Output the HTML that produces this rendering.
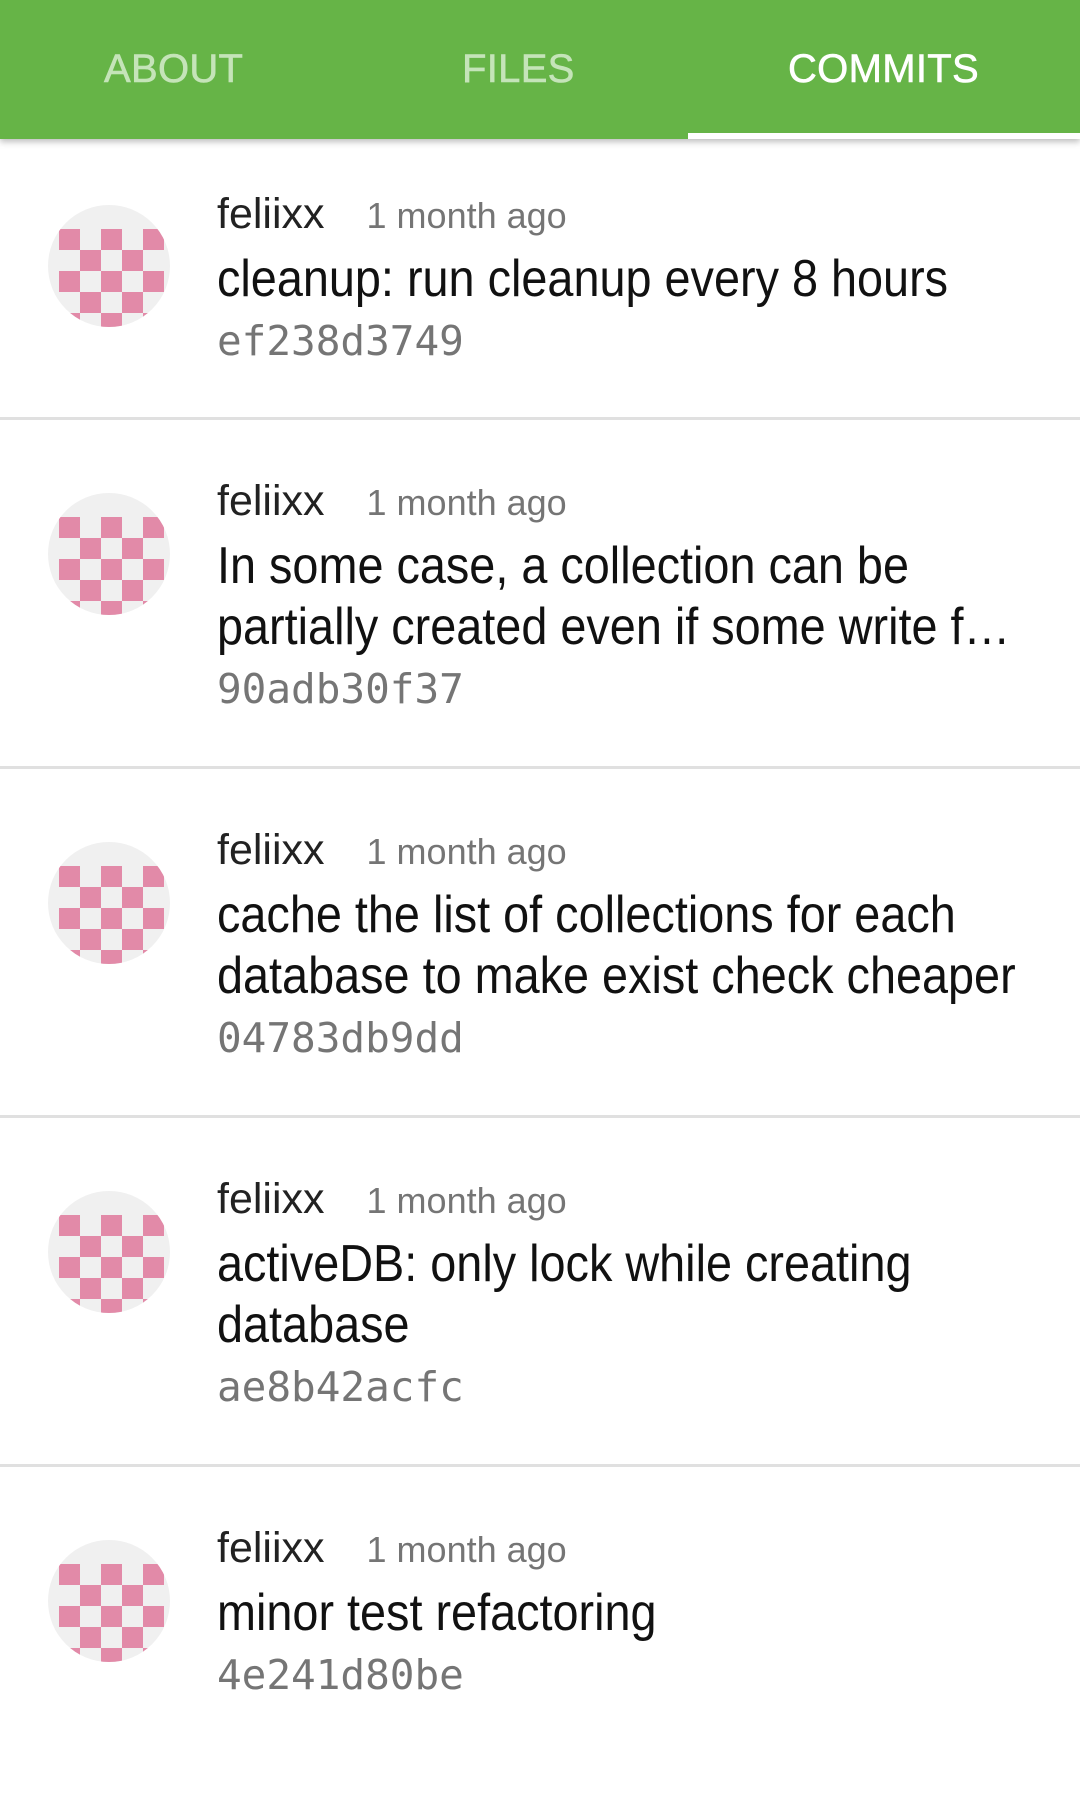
<!DOCTYPE html>
<html><head><meta charset="utf-8"><style>
*{margin:0;padding:0;box-sizing:border-box}
body{width:1080px;height:1699px;overflow:hidden;background:#fff;font-family:"Liberation Sans",sans-serif;position:relative}
.hdr{position:absolute;left:0;top:0;width:1080px;height:139px;background:#66b447;box-shadow:0 3px 6px rgba(0,0,0,0.25);z-index:2}
.tab{position:absolute;top:45px;font-size:40px;line-height:48px;color:#c5e4b9;letter-spacing:0.3px;-webkit-text-stroke:0.6px currentColor}
.ind{position:absolute;left:688px;top:133px;width:392px;height:6px;background:#fff}
.row{position:absolute;left:0;width:1080px;border-bottom:3px solid #e0e0e0}
.av{position:absolute;left:48px;width:122px;height:122px;border-radius:50%;overflow:hidden;background:#f0f0f0}
.txt{position:absolute;left:217px}
.au{height:50px;line-height:50px;white-space:nowrap}
.au .n{font-size:43px;color:#222}
.au .t{font-size:36px;color:#757575;margin-left:42px}
.ti{font-size:52px;line-height:61px;color:#111;white-space:nowrap;margin-top:10px}
.ti div{transform:scaleX(0.9);transform-origin:left center}
.h{font-family:"DejaVu Sans Mono","Liberation Mono",monospace;font-size:41px;line-height:62px;color:#757575;white-space:nowrap}
</style></head><body>
<div class="hdr">
<div class="tab" style="left:104px">ABOUT</div>
<div class="tab" style="left:462px">FILES</div>
<div class="tab" style="left:788px;color:#fff">COMMITS</div>
<div class="ind"></div>
</div>

<svg width="0" height="0" style="position:absolute">
<defs>
<g id="chk" fill="#e28aa8">
<rect x="11" y="24" width="21" height="21"/><rect x="53" y="24" width="21" height="21"/><rect x="95" y="24" width="21" height="21"/>
<rect x="32" y="45" width="21" height="21"/><rect x="74" y="45" width="21" height="21"/>
<rect x="11" y="66" width="21" height="21"/><rect x="53" y="66" width="21" height="21"/><rect x="95" y="66" width="21" height="21"/>
<rect x="32" y="87" width="21" height="21"/><rect x="74" y="87" width="21" height="21"/>
<rect x="11" y="108" width="21" height="21"/><rect x="53" y="108" width="21" height="21"/><rect x="95" y="108" width="21" height="21"/>
</g></defs></svg>

<div class="row" style="top:139px;height:281px">
<div class="av" style="top:66px"><svg width="122" height="122" viewBox="0 0 122 122"><use href="#chk"/></svg></div>
<div class="txt" style="top:50px">
<div class="au"><span class="n">feliixx</span><span class="t">1 month ago</span></div>
<div class="ti"><div>cleanup: run cleanup every 8 hours</div></div>
<div class="h">ef238d3749</div>
</div></div>

<div class="row" style="top:420px;height:349px">
<div class="av" style="top:73px"><svg width="122" height="122" viewBox="0 0 122 122"><use href="#chk"/></svg></div>
<div class="txt" style="top:56px">
<div class="au"><span class="n">feliixx</span><span class="t">1 month ago</span></div>
<div class="ti"><div>In some case, a collection can be</div><div>partially created even if some write f…</div></div>
<div class="h">90adb30f37</div>
</div></div>

<div class="row" style="top:769px;height:349px">
<div class="av" style="top:73px"><svg width="122" height="122" viewBox="0 0 122 122"><use href="#chk"/></svg></div>
<div class="txt" style="top:56px">
<div class="au"><span class="n">feliixx</span><span class="t">1 month ago</span></div>
<div class="ti"><div>cache the list of collections for each</div><div>database to make exist check cheaper</div></div>
<div class="h">04783db9dd</div>
</div></div>

<div class="row" style="top:1118px;height:349px">
<div class="av" style="top:73px"><svg width="122" height="122" viewBox="0 0 122 122"><use href="#chk"/></svg></div>
<div class="txt" style="top:56px">
<div class="au"><span class="n">feliixx</span><span class="t">1 month ago</span></div>
<div class="ti"><div>activeDB: only lock while creating</div><div>database</div></div>
<div class="h">ae8b42acfc</div>
</div></div>

<div class="row" style="top:1467px;height:349px;border:none">
<div class="av" style="top:73px"><svg width="122" height="122" viewBox="0 0 122 122"><use href="#chk"/></svg></div>
<div class="txt" style="top:56px">
<div class="au"><span class="n">feliixx</span><span class="t">1 month ago</span></div>
<div class="ti"><div>minor test refactoring</div></div>
<div class="h">4e241d80be</div>
</div></div>
</body></html>
